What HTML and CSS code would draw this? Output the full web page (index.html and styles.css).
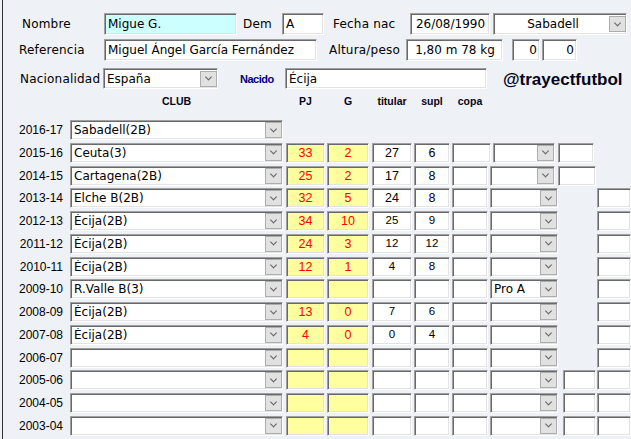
FILE: index.html
```html
<!DOCTYPE html>
<html lang="es">
<head>
    <meta charset="UTF-8">
    <title>Ficha jugador</title>
    <link rel="stylesheet" href="styles.css">
</head>
<body>
<div class="frame">
    <div class="line">
        <span class="lbl l-nombre">Nombre</span>
        <div class="fld nombre">Migue G.</div>
        <span class="lbl l-dem">Dem</span>
        <div class="fld dem">A</div>
        <span class="lbl l-fecha">Fecha nac</span>
        <div class="fld date">26/08/1990</div>
        <div class="fld combo ciudad"><span class="txt">Sabadell</span><i class="btn"></i></div>
    </div>
    <div class="line">
        <span class="lbl l-ref">Referencia</span>
        <div class="fld ref">Miguel Ángel García Fernández</div>
        <span class="lbl l-alt">Altura/peso</span>
        <div class="fld alt">1,80 m 78 kg</div>
        <div class="fld zero">0</div>
        <div class="fld zero2">0</div>
    </div>
    <div class="line third">
        <span class="lbl l-nac">Nacionalidad</span>
        <div class="fld combo nac"><span class="txt">España</span><i class="btn"></i></div>
        <span class="nacido">Nacido</span>
        <div class="fld origen">Écija</div>
        <span class="tag">@trayectfutbol</span>
    </div>

    <div class="heads">
        <span class="c-yr"></span>
        <span class="c-club">CLUB</span>
        <span class="c-pj">PJ</span>
        <span class="c-g">G</span>
        <span class="c-tit">titular</span>
        <span class="c-sup">supl</span>
        <span class="c-copa">copa</span>
    </div>

    <div class="seasons">
        <div class="tr">
            <span class="c-yr">2016-17</span>
            <div class="fld combo c-club"><span class="txt">Sabadell(2B)</span><i class="btn"></i></div>
        </div>
        <div class="tr early">
            <span class="c-yr">2015-16</span>
            <div class="fld combo c-club"><span class="txt">Ceuta(3)</span><i class="btn"></i></div>
            <div class="fld num yel c-pj">33</div>
            <div class="fld num yel c-g">2</div>
            <div class="fld num c-tit">27</div>
            <div class="fld num c-sup">6</div>
            <div class="fld c-copa"></div>
            <div class="fld combo c-liga"><span class="txt"></span><i class="btn"></i></div>
            <div class="fld c-ex"></div>
        </div>
        <div class="tr mid">
            <span class="c-yr">2014-15</span>
            <div class="fld combo c-club"><span class="txt">Cartagena(2B)</span><i class="btn"></i></div>
            <div class="fld num yel c-pj">25</div>
            <div class="fld num yel c-g">2</div>
            <div class="fld num c-tit">17</div>
            <div class="fld num c-sup">8</div>
            <div class="fld c-copa"></div>
            <div class="fld combo c-liga"><span class="txt"></span><i class="btn"></i></div>
            <div class="fld c-ex"></div>
        </div>
        <div class="tr">
            <span class="c-yr">2013-14</span>
            <div class="fld combo c-club"><span class="txt">Elche B(2B)</span><i class="btn"></i></div>
            <div class="fld num yel c-pj">32</div>
            <div class="fld num yel c-g">5</div>
            <div class="fld num c-tit">24</div>
            <div class="fld num c-sup">8</div>
            <div class="fld c-copa"></div>
            <div class="fld combo c-liga"><span class="txt"></span><i class="btn"></i></div>
            <div class="fld c-last solo"></div>
        </div>
        <div class="tr">
            <span class="c-yr">2012-13</span>
            <div class="fld combo c-club"><span class="txt">Écija(2B)</span><i class="btn"></i></div>
            <div class="fld num yel c-pj">34</div>
            <div class="fld num yel c-g">10</div>
            <div class="fld num hi c-tit">25</div>
            <div class="fld num hi c-sup">9</div>
            <div class="fld c-copa"></div>
            <div class="fld combo c-liga"><span class="txt"></span><i class="btn"></i></div>
            <div class="fld c-last solo"></div>
        </div>
        <div class="tr">
            <span class="c-yr">2011-12</span>
            <div class="fld combo c-club"><span class="txt">Écija(2B)</span><i class="btn"></i></div>
            <div class="fld num yel c-pj">24</div>
            <div class="fld num yel c-g">3</div>
            <div class="fld num hi c-tit">12</div>
            <div class="fld num hi c-sup">12</div>
            <div class="fld c-copa"></div>
            <div class="fld combo c-liga"><span class="txt"></span><i class="btn"></i></div>
            <div class="fld c-last solo"></div>
        </div>
        <div class="tr">
            <span class="c-yr">2010-11</span>
            <div class="fld combo c-club"><span class="txt">Écija(2B)</span><i class="btn"></i></div>
            <div class="fld num yel c-pj">12</div>
            <div class="fld num yel c-g">1</div>
            <div class="fld num hi c-tit">4</div>
            <div class="fld num hi c-sup">8</div>
            <div class="fld c-copa"></div>
            <div class="fld combo c-liga"><span class="txt"></span><i class="btn"></i></div>
            <div class="fld c-last solo"></div>
        </div>
        <div class="tr">
            <span class="c-yr">2009-10</span>
            <div class="fld combo c-club"><span class="txt">R.Valle B(3)</span><i class="btn"></i></div>
            <div class="fld num yel c-pj"></div>
            <div class="fld num yel c-g"></div>
            <div class="fld num c-tit"></div>
            <div class="fld num c-sup"></div>
            <div class="fld c-copa"></div>
            <div class="fld combo c-liga"><span class="txt">Pro A</span><i class="btn"></i></div>
            <div class="fld c-last solo"></div>
        </div>
        <div class="tr">
            <span class="c-yr">2008-09</span>
            <div class="fld combo c-club"><span class="txt">Écija(2B)</span><i class="btn"></i></div>
            <div class="fld num yel c-pj">13</div>
            <div class="fld num yel c-g">0</div>
            <div class="fld num hi c-tit">7</div>
            <div class="fld num hi c-sup">6</div>
            <div class="fld c-copa"></div>
            <div class="fld combo c-liga"><span class="txt"></span><i class="btn"></i></div>
            <div class="fld c-last solo"></div>
        </div>
        <div class="tr">
            <span class="c-yr">2007-08</span>
            <div class="fld combo c-club"><span class="txt">Écija(2B)</span><i class="btn"></i></div>
            <div class="fld num yel c-pj">4</div>
            <div class="fld num yel c-g">0</div>
            <div class="fld num hi c-tit">0</div>
            <div class="fld num hi c-sup">4</div>
            <div class="fld c-copa"></div>
            <div class="fld combo c-liga"><span class="txt"></span><i class="btn"></i></div>
            <div class="fld c-last solo"></div>
        </div>
        <div class="tr">
            <span class="c-yr">2006-07</span>
            <div class="fld combo c-club"><span class="txt"></span><i class="btn"></i></div>
            <div class="fld yel c-pj"></div>
            <div class="fld yel c-g"></div>
            <div class="fld c-tit"></div>
            <div class="fld c-sup"></div>
            <div class="fld c-copa"></div>
            <div class="fld combo c-liga"><span class="txt"></span><i class="btn"></i></div>
            <div class="fld c-last solo"></div>
        </div>
        <div class="tr">
            <span class="c-yr">2005-06</span>
            <div class="fld combo c-club"><span class="txt"></span><i class="btn"></i></div>
            <div class="fld yel c-pj"></div>
            <div class="fld yel c-g"></div>
            <div class="fld c-tit"></div>
            <div class="fld c-sup"></div>
            <div class="fld c-copa"></div>
            <div class="fld combo c-liga"><span class="txt"></span><i class="btn"></i></div>
            <div class="fld c-ex"></div>
            <div class="fld c-last"></div>
        </div>
        <div class="tr">
            <span class="c-yr">2004-05</span>
            <div class="fld combo c-club"><span class="txt"></span><i class="btn"></i></div>
            <div class="fld yel c-pj"></div>
            <div class="fld yel c-g"></div>
            <div class="fld c-tit"></div>
            <div class="fld c-sup"></div>
            <div class="fld c-copa"></div>
            <div class="fld combo c-liga"><span class="txt"></span><i class="btn"></i></div>
            <div class="fld c-ex"></div>
            <div class="fld c-last"></div>
        </div>
        <div class="tr">
            <span class="c-yr">2003-04</span>
            <div class="fld combo c-club"><span class="txt"></span><i class="btn"></i></div>
            <div class="fld yel c-pj"></div>
            <div class="fld yel c-g"></div>
            <div class="fld c-tit"></div>
            <div class="fld c-sup"></div>
            <div class="fld c-copa"></div>
            <div class="fld combo c-liga"><span class="txt"></span><i class="btn"></i></div>
            <div class="fld c-ex"></div>
            <div class="fld c-last"></div>
        </div>
        <!-- next row only shows its top edge -->
        <div class="tr">
            <span class="c-yr"></span>
            <div class="fld combo c-club"><span class="txt"></span><i class="btn"></i></div>
            <div class="fld yel c-pj"></div>
            <div class="fld yel c-g"></div>
            <div class="fld c-tit"></div>
            <div class="fld c-sup"></div>
            <div class="fld c-copa"></div>
            <div class="fld combo c-liga"><span class="txt"></span><i class="btn"></i></div>
            <div class="fld c-ex"></div>
            <div class="fld c-last"></div>
        </div>
    </div>
</div>
</body>
</html>
```

FILE: styles.css
```css
html, body {
    margin: 0;
    height: 439px;
    overflow: hidden;
}
body {
    background: #eef1f6;
    font-family: "DejaVu Sans", sans-serif;
    font-size: 12px;
    color: #000;
}
.frame {
    margin-left: 2px;
    border-left: 1px solid #333;
    height: 439px;
    box-sizing: border-box;
    padding: 13px 0 0 15px;
}

/* top form */
.line {
    display: flex;
    align-items: center;
    height: 22px;
}
.line + .line { margin-top: 4px; }
.line.third { margin-top: 7px; height: 21px; }
.lbl {
    box-sizing: border-box;
    letter-spacing: 0.2px;
    white-space: nowrap;
}
.l-nombre { width: 86px; padding-left: 4px; }
.l-ref { width: 86px; padding-left: 1px; }
.l-nac { width: 85px; padding-left: 2px; }
.l-dem { width: 45px; padding-left: 6px; }
.l-fecha { width: 86px; padding-left: 9px; }
.l-alt { width: 89px; padding-left: 12px; }
.nacido {
    box-sizing: border-box;
    width: 67px;
    padding-left: 22px;
    font: bold 11px "Liberation Sans", sans-serif;
    letter-spacing: -0.5px;
    color: #000080;
}
.tag {
    margin: 3px 0 0 16px;
    font: bold 17px "Liberation Sans", sans-serif;
    color: #05051a;
}

/* fields */
.fld {
    box-sizing: border-box;
    height: 100%;
    background: #fff;
    border: 1px solid;
    border-color: #a0a0a0 #fff #fff #a0a0a0;
    box-shadow: inset 1px 1px 0 #696969, inset -1px -1px 0 #e3e3e3;
    display: flex;
    align-items: center;
    padding: 0 2px 0 3px;
    overflow: hidden;
    white-space: nowrap;
}
.nombre { width: 133px; background: #ccffff; }
.dem { width: 42px; }
.date { width: 80px; justify-content: center; }
.ref { width: 213px; }
.alt { width: 97px; justify-content: center; }
.zero { width: 28px; margin-left: 9px; justify-content: flex-end; }
.zero2 { width: 35px; margin-left: 2px; justify-content: flex-end; }
.origen { width: 202px; }
.ciudad { width: 134px; margin-left: 3px; }
.ciudad .txt { text-align: center; }
.nac { width: 115px; }

.combo { padding-right: 0; }
.combo .txt { flex: 1; overflow: hidden; }
.btn {
    flex: none;
    width: 17px;
    height: 16px;
    box-sizing: border-box;
    background: #e1e1e1;
    border: 1px solid #adadad;
    display: flex;
    align-items: center;
    justify-content: center;
}
.btn::before {
    content: "";
    width: 4px;
    height: 4px;
    border-right: 1px solid #606060;
    border-bottom: 1px solid #606060;
    transform: translateY(-1.5px) rotate(45deg);
}

/* seasons table */
.heads {
    display: flex;
    height: 14px;
    margin-top: 5px;
    font: bold 10.5px "Liberation Sans", sans-serif;
    line-height: 14px;
    color: #05051a;
}
.heads span { text-align: center; }
.seasons { margin-top: 12px; }
.tr {
    display: flex;
    height: 20px;
    margin-bottom: 2.77px;
}
.c-yr {
    box-sizing: border-box;
    width: 48px;
    padding-right: 3px;
    text-align: right;
    font-family: "Liberation Sans", sans-serif;
    font-size: 12px;
    line-height: 20px;
}
.c-club { margin-left: 4px; width: 213px; }
.c-pj { margin-left: 3px; width: 39px; }
.c-g { margin-left: 2px; width: 42px; }
.c-tit { margin-left: 3px; width: 40px; }
.c-sup { margin-left: 2px; width: 36px; }
.c-copa { margin-left: 2px; width: 36px; }
.c-liga { margin-left: 2px; width: 68px; }
.c-ex { margin-left: 5px; width: 33px; }
.c-last { margin-left: 1px; width: 34px; }
.c-last.solo { margin-left: 39px; }
.early .c-copa { width: 39px; }
.early .c-liga { width: 62px; }
.early .c-ex { margin-left: 3px; width: 36px; }
.mid .c-liga { width: 65px; }
.mid .c-ex { margin-left: 3px; width: 38px; }

.num {
    justify-content: center;
    padding: 0;
    font-family: "Liberation Sans", sans-serif;
    font-size: 12.5px;
}
.num.hi {
    align-items: flex-start;
    padding-top: 2px;
    font-size: 11.5px;
}
.yel {
    background: #ffffa0;
    color: #f00;
}
```
